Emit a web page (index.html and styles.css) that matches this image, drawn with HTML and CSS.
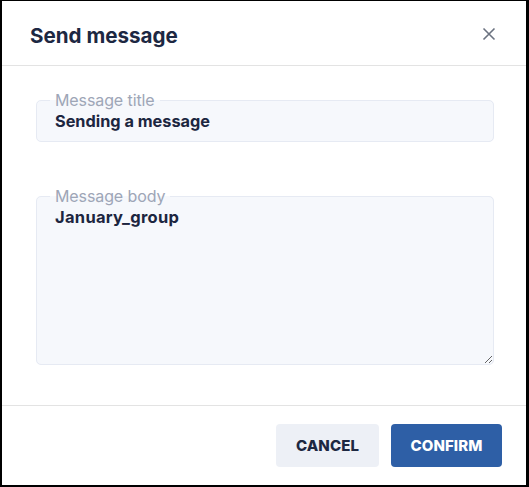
FILE: index.html
```html
<!DOCTYPE html>
<html>
<head>
<meta charset="utf-8">
<link rel="stylesheet" href="styles.css">
</head>
<body>
<div class="dialog">
  <div class="header">
    <h1 class="title">Send message</h1>
    <button class="close" aria-label="Close">
      <svg width="14" height="14" viewBox="0 0 14 14"><path d="M1.5 1.5 L12.5 12.5 M12.5 1.5 L1.5 12.5" stroke="#6b7280" stroke-width="1.6" fill="none"/></svg>
    </button>
  </div>
  <div class="content">
    <fieldset class="field field-title">
      <legend class="legend">Message title</legend>
      <div class="value">Sending a message</div>
    </fieldset>
    <fieldset class="field field-body">
      <legend class="legend">Message body</legend>
      <textarea class="area">January_group</textarea>
    </fieldset>
  </div>
  <div class="footer">
    <button class="btn btn-cancel">CANCEL</button>
    <button class="btn btn-confirm">CONFIRM</button>
  </div>
</div>
</body>
</html>
```
FILE: styles.css
```css
* { box-sizing: border-box; }
html, body { margin: 0; padding: 0; background: #fff; }
body { font-family: Inter, "Noto Sans", sans-serif; }
.dialog {
  width: 529px;
  height: 487px;
  border-style: solid;
  border-color: #000;
  border-width: 1px 3px 2px 2px;
  display: flex;
  flex-direction: column;
  background: #fff;
}
.header {
  height: 65px;
  border-bottom: 1px solid #e3e3e3;
  display: flex;
  align-items: center;
  justify-content: space-between;
  padding: 4px 28px 0 28px;
}
.title {
  margin: 0;
  font-size: 20.6px;
  font-weight: 700;
  color: #1d2842;
  letter-spacing: 0;
}
.close {
  border: 0;
  background: none;
  padding: 0;
  width: 14px;
  height: 14px;
  display: flex;
  margin-right: 2px;
  margin-top: -2px;
}
.content {
  flex: 1;
  padding: 26px 32px 40px 34px;
  display: flex;
  flex-direction: column;
  gap: 46px;
  border-bottom: 1px solid #e3e3e3;
}
.field {
  margin: 0;
  border: 1px solid #e6eaf3;
  background: #f6f8fc;
  border-radius: 5px;
  padding: 0 18px 0 13px;
  min-width: 0;
}
.legend {
  font-size: 16px;
  color: #9ea6b7;
  padding: 0 5px;
  line-height: 16px;
  letter-spacing: -0.1px;
}
.field-title { height: 50px; }
.value {
  font-size: 16.3px;
  font-weight: 700;
  color: #1c2640;
  line-height: 20px;
  margin-top: 3px;
  padding-left: 5px;
}
.field-body {
  height: 177px;
  padding: 0 0 0 13px;
  display: flex;
}
.area {
  width: 100%;
  height: 160px;
  border: 0;
  background: transparent;
  resize: vertical;
  font-family: Inter, "Noto Sans", sans-serif;
  font-size: 16.5px;
  font-weight: 700;
  color: #1c2640;
  line-height: 20px;
  padding: 3px 0 0 5px;
  margin: 0;
  outline: none;
  letter-spacing: 0.3px;
}
.footer {
  height: 79px;
  display: flex;
  justify-content: flex-end;
  align-items: flex-start;
  padding: 18px 24px 0 0;
  gap: 12px;
}
.btn {
  height: 43px;
  border: 0;
  border-radius: 4px;
  font-family: Inter, "Noto Sans", sans-serif;
  font-size: 15px;
  font-weight: 800;
  letter-spacing: 0.1px;
  cursor: pointer;
}
.btn-cancel {
  width: 103px;
  background: #edf0f6;
  color: #1d2842;
}
.btn-confirm {
  width: 111px;
  background: #2e5fa6;
  color: #fff;
}
```
